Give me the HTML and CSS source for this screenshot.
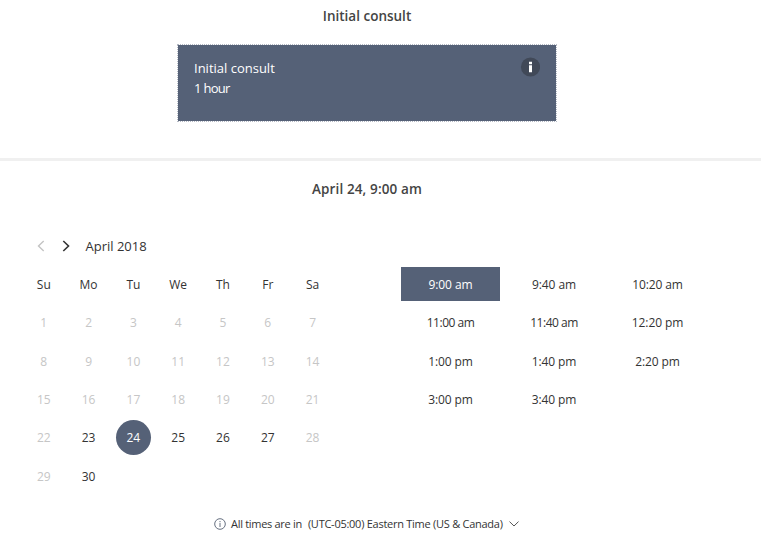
FILE: index.html
```html
<!DOCTYPE html>
<html lang="en">
<head>
<meta charset="utf-8">
<title>Book an appointment</title>
<link rel="stylesheet" href="styles.css">
</head>
<body>
<section class="service">
  <h2 class="heading heading-service"><span>Initial consult</span></h2>
  <div class="card">
    <div>
      <div class="card-name"><span>Initial consult</span></div>
      <div class="card-length"><span>1 hour</span></div>
    </div>
    <svg class="card-info" width="20" height="20" viewBox="0 0 20 20"><circle cx="10.5" cy="10" r="9.6" fill="#414958"/><path d="M9 4.8h3v2.4H9zM9 8.2h3v7H9z" fill="#fff"/></svg>
  </div>
</section>
<section class="schedule">
  <h2 class="heading heading-date"><span>April 24, 9:00 am</span></h2>
  <div class="pickers">
    <div class="calendar">
      <div class="month">
        <svg width="8" height="12" viewBox="0 0 8 12"><path d="M6.7 1 1.5 6l5.2 5" fill="none" stroke="#c4c4c4" stroke-width="1.4"/></svg>
        <svg class="next" width="8" height="12" viewBox="0 0 8 12"><path d="M1.3 1 6.5 6l-5.2 5" fill="none" stroke="#333" stroke-width="1.6"/></svg>
        <span class="month-name">April 2018</span>
      </div>
      <div class="days">
        <span>Su</span><span>Mo</span><span>Tu</span><span>We</span><span>Th</span><span>Fr</span><span>Sa</span>
        <span class="off">1</span><span class="off">2</span><span class="off">3</span><span class="off">4</span><span class="off">5</span><span class="off">6</span><span class="off">7</span>
        <span class="off">8</span><span class="off">9</span><span class="off">10</span><span class="off">11</span><span class="off">12</span><span class="off">13</span><span class="off">14</span>
        <span class="off">15</span><span class="off">16</span><span class="off">17</span><span class="off">18</span><span class="off">19</span><span class="off">20</span><span class="off">21</span>
        <span class="off">22</span><span>23</span><span class="picked"><b>24</b></span><span>25</span><span>26</span><span>27</span><span class="off">28</span>
        <span class="off">29</span><span>30</span>
      </div>
    </div>
    <div class="times">
      <span class="chosen">9:00 am</span><span>9:40 am</span><span>10:20 am</span>
      <span class="tight">11:00 am</span><span class="tight">11:40 am</span><span>12:20 pm</span>
      <span>1:00 pm</span><span>1:40 pm</span><span>2:20 pm</span>
      <span>3:00 pm</span><span>3:40 pm</span>
    </div>
  </div>
  <div class="zone">
    <svg width="12" height="12" viewBox="0 0 12 12"><circle cx="6" cy="6" r="5.3" fill="none" stroke="#667080"/><path d="M6 3v1.2M6 5v4" stroke="#667080"/></svg>
    <span class="zone-label">All times are in</span>
    <span class="zone-name">(UTC-05:00) Eastern Time (US &amp; Canada)</span>
    <svg class="down" width="10" height="6" viewBox="0 0 10 6"><path d="M.5.6 5 5 9.5.6" fill="none" stroke="#555"/></svg>
  </div>
</section>
</body>
</html>
```
FILE: styles.css
```css
* { box-sizing: border-box; }
body {
  margin: 0;
  background: #fff;
  color: #333;
  font: 13px/20px "Open Sans", "Noto Sans", sans-serif;
  overflow: hidden;
}
.service {
  height: 161px;
  padding: 6px 27px 0 0;
  border-bottom: 3px solid #f0f0f0;
}
.heading {
  margin: 0;
  text-align: center;
  font-size: 13.5px;
  line-height: 20px;
  font-weight: 600;
  color: #444;
}
.heading-date { letter-spacing: .12px; }
.card {
  display: flex;
  justify-content: space-between;
  width: 380px;
  height: 78px;
  margin: 18px auto 0;
  padding: 13px 16px 0;
  background: #556177;
  border: 1px dotted #b5bac4;
  background-clip: padding-box;
  color: #fff;
}
.card-length { letter-spacing: -.7px; }
.card-info { margin-top: -1px; }
.schedule { padding: 18px 27px 0 0; }
.pickers {
  display: flex;
  height: 310px;
  padding: 37px 0 0 21px;
}
.calendar { width: 314px; }
.month {
  display: flex;
  align-items: center;
  height: 20px;
  padding-left: 16px;
}
.next { margin-left: 17px; }
.month-name { margin-left: 15.5px; }
.days {
  display: grid;
  grid-template-columns: repeat(7, 44.8px);
  grid-template-rows: 38px;
  grid-auto-rows: 38.4px;
  margin: 10px 0 0 .4px;
  font-size: 12px;
}
.days span {
  display: flex;
  align-items: center;
  justify-content: center;
}
.days .off { color: #c6c6c6; }
.days b {
  width: 35px;
  height: 35px;
  margin-top: -1px;
  border-radius: 50%;
  background: #556177;
  color: #fff;
  font-weight: 400;
  line-height: 36px;
  text-align: center;
}
.times {
  display: grid;
  grid-template-columns: repeat(3, 99px);
  grid-auto-rows: 34px;
  gap: 4.4px 4.5px;
  align-content: start;
  margin: 31px 0 0 66px;
  font-size: 12px;
  line-height: 36px;
  letter-spacing: -.1px;
  text-align: center;
}
.tight { letter-spacing: -.5px; }
.chosen { background: #556177; color: #fff; }
.zone {
  display: flex;
  align-items: center;
  height: 20px;
  margin-top: 5px;
  padding-left: 214px;
  font-size: 11px;
  white-space: nowrap;
}
.zone-label { margin-left: 5px; letter-spacing: -.3px; }
.zone-name { margin-left: 6px; letter-spacing: -.26px; }
.down { margin-left: 6px; }
```
